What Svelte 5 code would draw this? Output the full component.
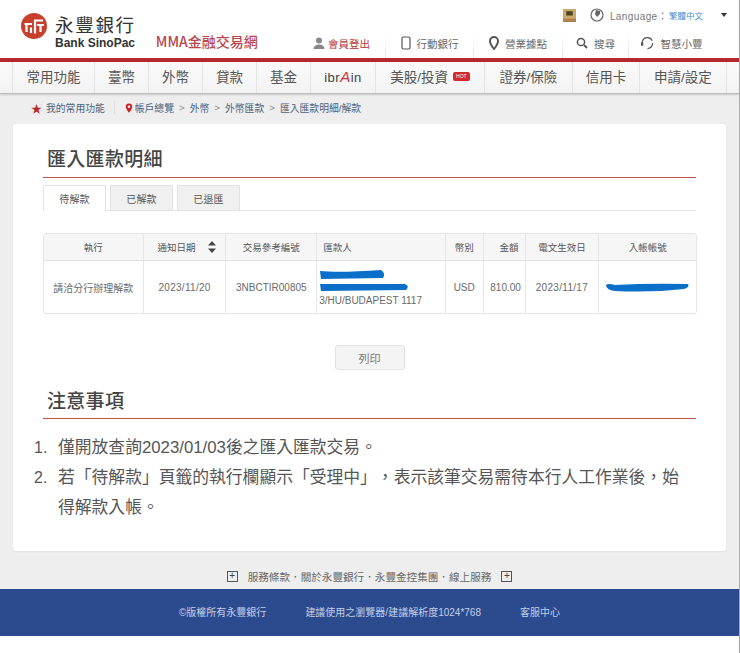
<script>
  const topLinks = [
    { label: '行動銀行', icon: 'phone', w: 88 },
    { label: '營業據點', icon: 'pin', w: 89 },
    { label: '搜尋', icon: 'search', w: 66 },
    { label: '智慧小豐', icon: 'head', w: 84 }
  ];
  const nav = [
    { label: '常用功能', w: 82 }, { label: '臺幣', w: 54 }, { label: '外幣', w: 54 }, { label: '貸款', w: 54 },
    { label: '基金', w: 54 }, { label: 'ibrAin', w: 65, brand: true }, { label: '美股/投資', w: 109, hot: true },
    { label: '證券/保險', w: 88 }, { label: '信用卡', w: 67 }, { label: '申請/設定', w: 88 }
  ];
  const crumbs = ['帳戶總覽', '外幣', '外幣匯款', '匯入匯款明細/解款'];
  const tabs = ['待解款', '已解款', '已退匯'];
  const headers = [
    { t: '執行', w: 100 }, { t: '通知日期', w: 83, sort: true }, { t: '交易參考編號', w: 91 },
    { t: '匯款人', w: 129, left: true }, { t: '幣別', w: 38 }, { t: '金額', w: 42, right: true },
    { t: '電文生效日', w: 74 }, { t: '入帳帳號', w: 97 }
  ];
</script>

<div class="page">
  <header class="top">
    <div class="brand">
      <svg class="logo" viewBox="0 0 26 26" width="26" height="26">
        <circle cx="13" cy="13" r="13" fill="#c8402c" />
        <path d="M3.500 11 H11 M5.500 11 V19 M10 14.500 V20 M14 20.500 V7.500 H22 M16 12 H23 M19.500 12 V19" stroke="#fff" stroke-width="2.200" fill="none" />
      </svg>
      <div class="names">
        <div class="zh">永豐銀行</div>
        <div class="en">Bank SinoPac</div>
      </div>
      <div class="mma">MMA金融交易網</div>
    </div>
    <div class="top-right">
      <div class="lang">
        <svg class="flag" viewBox="0 0 12 12" width="13" height="13">
          <rect width="12" height="12" fill="#c9ab6c" /><rect y="9" width="12" height="3" fill="#b0814e" /><rect x="3" y="2" width="6" height="4" fill="#4d4426" />
        </svg>
        <svg class="globe" viewBox="0 0 14 14" width="14" height="14">
          <circle cx="7" cy="7" r="6" fill="#fff" stroke="#666" stroke-width="1.200" />
          <path d="M6 2 L10 3 L10 6 L7 9 L5 6 Z" fill="#666" />
        </svg>
        <span class="lang-l">Language：</span>
        <span class="lang-v">繁體中文</span>
        <span class="caret"></span>
      </div>
      <div class="links">
        <span class="link logout">
          <svg viewBox="0 0 12 12" width="12" height="12"><circle cx="6" cy="3.500" r="3" fill="#888" /><path d="M0.500 12 Q1 7.500 6 7.500 Q11 7.500 11.500 12 Z" fill="#888" /></svg>
          會員登出
        </span>
        {#each topLinks as l}
          <span class="link" style="width:{l.w}px">
            {#if l.icon === 'phone'}
              <svg viewBox="0 0 10 14" width="10" height="14"><rect x="1" y="1" width="8" height="12" rx="1.500" fill="none" stroke="#555" stroke-width="1.200" /></svg>
            {:else if l.icon === 'pin'}
              <svg viewBox="0 0 10 14" width="10" height="14"><path d="M5 13 Q1 8 1 5 A4 4 0 0 1 9 5 Q9 8 5 13 Z" fill="none" stroke="#555" stroke-width="2" /></svg>
            {:else if l.icon === 'search'}
              <svg viewBox="0 0 12 12" width="12" height="12"><circle cx="5" cy="5" r="3.600" fill="none" stroke="#555" stroke-width="1.500" /><path d="M8 8 L11 11" stroke="#555" stroke-width="1.800" /></svg>
            {:else}
              <svg viewBox="0 0 16 14" width="15" height="14"><path d="M2.500 6 A5.500 5.500 0 0 1 13 4.500" fill="none" stroke="#555" stroke-width="1.300" /><path d="M13.500 7 Q13.500 12 8 13" fill="none" stroke="#555" stroke-width="1.300" /><rect x="1" y="6" width="2.500" height="4" rx="1" fill="#555" /></svg>
            {/if}
            {l.label}
          </span>
        {/each}
      </div>
    </div>
  </header>

  <nav class="nav">
    {#each nav as n}
      <div class="nav-i" style="width:{n.w}px">
        {#if n.brand}
          <span class="ibr">ibr<em>A</em>in</span>
        {:else}
          {n.label}
        {/if}
        {#if n.hot}<span class="hot">HOT</span>{/if}
      </div>
    {/each}
  </nav>

  <div class="crumb">
    <span class="star">★</span>
    <span>我的常用功能</span>
    <i class="sep"></i>
    <svg class="crumb-pin" viewBox="0 0 10 12" width="8" height="10"><path d="M5 12 Q1 7 1 4.500 A4 4 0 0 1 9 4.500 Q9 7 5 12 Z" fill="#c9252c" /><circle cx="5" cy="4.500" r="1.500" fill="#fff" /></svg>
    {#each crumbs as c, i}
      {#if i > 0}<span class="gt">&gt;</span>{/if}
      <span>{c}</span>
    {/each}
  </div>

  <main class="card">
    <h2>匯入匯款明細</h2>
    <div class="tabs">
      {#each tabs as t, i}
        <div class="tab" class:active={i === 0}>{t}</div>
      {/each}
    </div>

    <div class="table">
      <div class="row head">
        {#each headers as h}
          <div class="cell" class:left={h.left} class:right={h.right} class:sorted={h.sort} style="width:{h.w}px">
            {h.t}
            {#if h.sort}
              <svg class="sort" viewBox="0 0 8 12" width="8" height="12"><path d="M4 0 L8 4.500 H0 Z M4 12 L8 7.500 H0 Z" fill="#444" /></svg>
            {/if}
          </div>
        {/each}
      </div>
      <div class="row body">
        <div class="cell" style="width:100px">請洽分行辦理解款</div>
        <div class="cell date" style="width:83px">2023/11/20</div>
        <div class="cell" style="width:91px">3NBCTIR00805</div>
        <div class="cell payer" style="width:129px">
          <svg viewBox="0 0 66 9" width="66" height="9"><path d="M1 1 Q20 3 62 0 Q67 3 64 8 L2 9 Z" fill="#0a6fc9" /></svg>
          <svg viewBox="0 0 90 8" width="90" height="8"><path d="M1 1 H86 Q91 3 87 7 L2 8 Z" fill="#0a6fc9" /></svg>
          <span>3/HU/BUDAPEST 1117</span>
        </div>
        <div class="cell" style="width:38px">USD</div>
        <div class="cell amount" style="width:42px">810.00</div>
        <div class="cell date" style="width:74px">2023/11/17</div>
        <div class="cell" style="width:97px">
          <svg viewBox="0 0 86 11" width="85" height="11"><path d="M1 3 Q3 1 10 3 Q45 1 84 2 Q86 5 80 7 Q45 11 10 9 Q1 8 1 3 Z" fill="#0a6fc9" /></svg>
        </div>
      </div>
    </div>

    <div class="print-wrap"><button class="print">列印</button></div>

    <h2 class="notes-h">注意事項</h2>
    <ol class="notes">
      <li>僅開放查詢2023/01/03後之匯入匯款交易。</li>
      <li>若「待解款」頁籤的執行欄顯示「受理中」，表示該筆交易需待本行人工作業後，始得解款入帳。</li>
    </ol>
  </main>

  <div class="foot-links">
    <span class="plus">+</span>
    <span>服務條款．關於永豐銀行．永豐金控集團．線上服務</span>
    <span class="plus">+</span>
  </div>
  <footer class="foot">
    <span>©版權所有永豐銀行</span>
    <span>建議使用之瀏覽器/建議解析度1024*768</span>
    <span>客服中心</span>
  </footer>
  <div class="tail"></div>
</div>

<style>
  :global(body) {
    margin: 0;
    background: #fff;
  }
  .page {
    width: 740px;
    height: 653px;
    box-sizing: border-box;
    border-right: 1px solid #a8a8a8;
    overflow: hidden;
    background: #eeeeee;
    font-family: "Liberation Sans", "Noto Sans CJK TC", sans-serif;
    color: #555;
  }
  .top {
    height: 58px;
    background: #fff;
    display: flex;
    justify-content: space-between;
    border-bottom: 4px solid #b5282c;
    box-sizing: content-box;
  }
  .brand {
    display: flex;
    align-items: flex-start;
    padding: 13px 0 0 21px;
  }
  .logo { margin-right: 8px; }
  .names { margin-top: 1px; }
  .zh {
    font-size: 18.500px;
    letter-spacing: 1.700px;
    line-height: 23px;
    color: #333;
  }
  .en {
    font-size: 12px;
    font-weight: 700;
    line-height: 13px;
    color: #333;
  }
  .mma {
    margin: 21px 0 0 9px;
    padding-left: 11px;
    font-family: "Noto Sans CJK TC", sans-serif;
    font-size: 14px;
    line-height: 14px;
    color: #b8464c;
    font-weight: 500;
  }
  .top-right {
    display: flex;
    flex-direction: column;
    align-items: flex-end;
    padding-right: 12px;
  }
  .lang {
    display: flex;
    align-items: center;
    height: 30px;
    font-size: 10px;
    color: #777;
  }
  .flag { margin-right: 14px; }
  .globe { margin-right: 6px; }
  .lang-l { letter-spacing: 0.400px; margin-right: 1px; }
  .lang-v { color: #4a90d0; font-size: 8.500px; }
  .caret {
    width: 0;
    height: 0;
    border: 3px solid transparent;
    border-top: 4px solid #333;
    border-bottom: 0;
    margin: 0 0 0 18px;
  }
  .links {
    display: flex;
    height: 28px;
    padding-right: 14px;
  }
  .link {
    display: flex;
    align-items: center;
    justify-content: center;
    gap: 6px;
    font-size: 10.500px;
    color: #666;
    height: 28px;
    padding-bottom: 2px;
    border-right: 1px solid transparent;
    border-image: linear-gradient(transparent 15%, #e2e2e2) 1;
    box-sizing: border-box;
  }
  .link:last-child { border-right: 0; border-image: none; }
  .logout {
    color: #b5343a;
    width: 73px;
    gap: 3px;
    justify-content: flex-start;
  }
  .nav {
    height: 31px;
    padding: 0 0 0 12px;
    display: flex;
    background: linear-gradient(#fafafa, #f3f3f3);
    border-bottom: 1px solid #bbb;
    box-shadow: 0 1px 2px rgba(0, 0, 0, 0.150);
    position: relative;
  }
  .nav-i {
    box-sizing: border-box;
    border-left: 1px solid #e3e3e3;
    display: flex;
    align-items: center;
    justify-content: center;
    font-size: 13.500px;
    color: #555;
    gap: 5px;
    padding-bottom: 3px;
  }
  .nav-i:last-child { border-right: 1px solid #e3e3e3; }
  .ibr { font-size: 13px; letter-spacing: 0.500px; color: #444; }
  .ibr em { color: #d0343a; font-size: 15px; font-style: italic; }
  .hot {
    background: #cf2a30;
    color: #fff;
    font-size: 5px;
    padding: 1px 3px;
    border-radius: 2px;
    line-height: 7px;
  }
  .crumb {
    height: 29px;
    padding: 0 0 2px 31px;
    box-sizing: border-box;
    display: flex;
    align-items: center;
    gap: 4px;
    font-size: 9.800px;
    color: #4a6380;
  }
  .star { color: #b5282c; font-size: 11px; }
  .sep {
    width: 1px;
    height: 13px;
    background: #ddd;
    margin: 0 6px 0 5px;
  }
  .crumb-pin { margin-right: -2px; }
  .gt { color: #888; margin: 0 1px; }
  .card {
    margin: 1px 13px 0;
    height: 427px;
    box-sizing: border-box;
    background: #fff;
    border-radius: 3px;
    padding: 22px 30px 0;
    box-shadow: 0 1px 2px rgba(0, 0, 0, 0.050);
  }
  h2 {
    margin: 0;
    height: 31px;
    padding-left: 4px;
    font-size: 19px;
    line-height: 28px;
    font-weight: 500;
    color: #444;
    border-bottom: 1px solid #c0524e;
    box-sizing: content-box;
    letter-spacing: 0.300px;
  }
  .tabs {
    display: flex;
    gap: 4px;
    height: 25px;
    margin-top: 7px;
    border-bottom: 1px solid #e4e4e4;
  }
  .tab {
    width: 63px;
    box-sizing: border-box;
    height: 25px;
    background: #f0f0f0;
    border: 1px solid #e2e2e2;
    border-bottom: 0;
    font-size: 10px;
    color: #555;
    display: flex;
    align-items: center;
    justify-content: center;
    letter-spacing: 0.200px;
  }
  .tab.active {
    background: #fff;
    height: 26px;
  }
  .table {
    margin-top: 22px;
    width: 654px;
    border: 1px solid #e6e6e6;
    border-radius: 3px;
    box-sizing: border-box;
    overflow: hidden;
  }
  .row { display: flex; }
  .head {
    height: 27px;
    background: #f6f6f6;
    border-bottom: 1px solid #e2e2e2;
    box-sizing: border-box;
    color: #555;
  }
  .body { height: 52px; color: #6a6a6a; }
  .cell {
    box-sizing: border-box;
    border-right: 1px solid #e6e6e6;
    font-size: 10px;
    display: flex;
    align-items: center;
    justify-content: center;
    gap: 12px;
  }
  .cell:last-child { border-right: 0; }
  .head .cell { font-size: 9.500px; }
  .cell.date { letter-spacing: 0.300px; }
  .cell.amount { padding-left: 3px; }
  .cell.sorted { padding-left: 4px; }
  .cell.left { justify-content: flex-start; padding-left: 6px; }
  .cell.right { justify-content: flex-end; padding-right: 6px; }
  .payer {
    flex-direction: column;
    align-items: flex-start;
    justify-content: center;
    gap: 4px;
    padding-left: 2px;
    line-height: 12px;
    padding-top: 2px;
  }
  .print-wrap {
    display: flex;
    justify-content: center;
    margin-top: 31px;
  }
  .print {
    width: 70px;
    height: 25px;
    background: #f4f4f4;
    border: 1px solid #e2e2e2;
    border-radius: 3px;
    color: #777;
    font-size: 11px;
    font-family: inherit;
  }
  .notes-h { margin-top: 18px; height: 30px; }
  .notes {
    margin: 14px 0 0;
    padding: 0 8px 0 15px;
    list-style: none;
    counter-reset: n;
    font-size: 16.800px;
    line-height: 30px;
    color: #555;
    text-spacing-trim: space-all;
  }
  .notes li {
    counter-increment: n;
    display: grid;
    grid-template-columns: 0 1fr;
  }
  .notes li::before {
    content: counter(n) ".";
    margin-left: -24px;
    font-size: 16px;
  }
  .foot-links {
    height: 38px;
    padding-bottom: 4px;
    box-sizing: border-box;
    display: flex;
    align-items: flex-end;
    justify-content: center;
    gap: 10px;
    font-size: 10.600px;
    line-height: 16px;
    color: #666;
  }
  .plus {
    width: 9px;
    height: 9px;
    border: 1px solid #555;
    line-height: 8px;
    font-size: 10px;
    text-align: center;
    color: #444;
    margin-bottom: 3px;
  }
  .foot {
    height: 47px;
    box-sizing: border-box;
    padding-bottom: 3px;
    background: #2c4a8e;
    color: #c3d0e6;
    font-size: 10px;
    display: flex;
    align-items: center;
    justify-content: center;
    gap: 39px;
  }
  .tail {
    height: 17px;
    background: #fff;
  }
</style>
